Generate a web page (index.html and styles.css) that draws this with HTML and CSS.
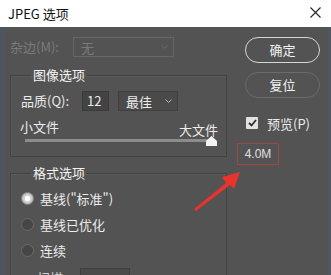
FILE: index.html
```html
<!DOCTYPE html>
<html lang="zh">
<head>
<meta charset="utf-8">
<title>JPEG 选项</title>
<link rel="stylesheet" href="styles.css">
</head>
<body>
<div class="window">
  <div class="titlebar">
    <span class="title">JPEG 选项</span>
    <svg class="close" width="11" height="11" viewBox="0 0 11 11"><path d="M0.5 0.5 L10.5 10.5 M10.5 0.5 L0.5 10.5" stroke="#222" stroke-width="1.1" fill="none"/></svg>
  </div>
  <div class="body">
    <div class="left">
      <div class="row matte">
        <span class="label dim">杂边(M):</span>
        <div class="select disabled"><span>无</span><svg class="chev" width="7" height="4" viewBox="0 0 7 4"><path d="M0.5 0.5 L3.5 3.5 L6.5 0.5" stroke="#6a6a6a" fill="none"/></svg></div>
      </div>
      <fieldset class="group image-opts">
        <legend>图像选项</legend>
        <div class="row quality">
          <span class="label qlabel">品质(Q):</span>
          <div class="input">12</div>
          <div class="select best"><span>最佳</span><svg class="chev" width="7" height="4" viewBox="0 0 7 4"><path d="M0.5 0.5 L3.5 3.5 L6.5 0.5" stroke="#b8b8b8" fill="none"/></svg></div>
        </div>
        <div class="sizes">
          <span class="small">小文件</span>
          <span class="large">大文件</span>
        </div>
        <div class="slider">
          <div class="track"></div>
          <svg class="thumb" width="11" height="10" viewBox="0 0 11 10"><path d="M5.5 0 L11 5 L11 10 L0 10 L0 5 Z" fill="#f2f2f2"/></svg>
        </div>
      </fieldset>
      <fieldset class="group format-opts">
        <legend>格式选项</legend>
        <div class="radio-row"><span class="radio on"></span><span>基线("标准")</span></div>
        <div class="radio-row"><span class="radio"></span><span>基线已优化</span></div>
        <div class="radio-row"><span class="radio"></span><span>连续</span></div>
        <div class="row scan"><span class="label scan-label">扫描:</span><div class="select scan-sel"></div></div>
      </fieldset>
    </div>
    <div class="right">
      <button class="btn primary">确定</button>
      <button class="btn secondary">复位</button>
      <div class="check">
        <span class="box"><svg width="9" height="8" viewBox="0 0 9 8"><path d="M1 4 L3.5 6.5 L8 1" stroke="#2e2e2e" stroke-width="1.8" fill="none"/></svg></span>
        <span>预览(P)</span>
      </div>
      <div class="filesize">4.0M</div>
    </div>
  </div>
  <svg class="arrow" width="331" height="275" viewBox="0 0 331 275">
    <path d="M194 209 L226 183 L222 177 L240 172 L234 189 L230 185 L196 211 Z" fill="#e8332e"/>
  </svg>
</div>
</body>
</html>
```
FILE: styles.css
```css
* { box-sizing: border-box; }
html, body { margin: 0; padding: 0; }
body {
  width: 331px;
  height: 275px;
  overflow: hidden;
  font-family: "Noto Sans CJK SC", "Noto Sans", sans-serif;
  font-size: 13px;
  color: #ececec;
  background: #535353;
}
.window {
  position: relative;
  width: 331px;
  height: 275px;
}
.titlebar {
  height: 27px;
  background: #ffffff;
  display: flex;
  align-items: center;
  justify-content: space-between;
  padding: 0 10px 0 8px;
}
.title {
  color: #111;
  font-size: 13px;
  line-height: 16px;
}
.close { margin-top: -2px; }
.body {
  display: flex;
  height: 248px;
  background: #535353;
  border-left: 6px solid #4e555d;
  border-right: 3px solid #4f5760;
  padding: 10px 0 0 4px;
}
.left {
  width: 217px;
  flex: none;
}
.row {
  display: flex;
  align-items: center;
  height: 20px;
}
.label { line-height: 20px; }
.dim { color: #7b7b7b; }
.matte .label { width: 63px; }
.select {
  height: 20px;
  display: flex;
  align-items: center;
  justify-content: space-between;
  border: 1px solid #3f3f3f;
  background: #4a4a4a;
  padding: 0 5px 0 7px;
}
.select.disabled {
  width: 101px;
  background: #535353;
  border-color: #666;
  color: #7b7b7b;
}
.group {
  margin: 0;
  border: 1px solid #424242;
  box-shadow: inset 1px 1px 0 #5b5b5b;
  padding: 0 8px 0 10px;
  min-width: 0;
}
.group legend {
  margin-left: 10px;
  padding: 0 2px;
  line-height: 18px;
  color: #f4f4f4;
}
.image-opts {
  margin-top: 9px;
  padding-bottom: 9px;
}
.quality { margin-top: 7px; }
.qlabel { width: 61px; }
.input {
  width: 27px;
  height: 20px;
  background: #434343;
  border: 1px solid #3a3a3a;
  line-height: 18px;
  padding-left: 4px;
}
.best {
  width: 60px;
  margin-left: 9px;
}
.sizes {
  display: flex;
  justify-content: space-between;
  height: 20px;
  margin-top: 6px;
  margin-left: -1px;
}
.small { line-height: 20px; }
.large { line-height: 20px; margin-top: 3px; }
.slider {
  position: relative;
  height: 8px;
  margin-left: 4px;
  margin-right: 5px;
}
.track {
  margin-top: 2px;
  height: 3px;
  background: #8c8c8c;
}
.thumb {
  position: absolute;
  right: -4px;
  top: -3px;
}
.format-opts {
  margin-top: 7px;
  padding-top: 3px;
  height: 120px;
}
.radio-row {
  display: flex;
  align-items: center;
  height: 26px;
  gap: 6px;
}
.radio {
  width: 13px;
  height: 13px;
  border-radius: 50%;
  border: 1px solid #6a6a6a;
  background: #464646;
  flex: none;
}
.radio.on {
  background: radial-gradient(circle, #ffffff 0 2.5px, #d4d4d4 3px 4px, #bdbdbd 4.5px);
  border-color: #8a8a8a;
}
.scan { margin-top: 5px; }
.scan-label { color: #cfcfcf; width: 59px; padding-left: 16px; }
.scan-sel { width: 50px; }
.right {
  width: 95px;
  flex: none;
  margin-left: 9px;
  display: flex;
  flex-direction: column;
}
.btn {
  width: 75px;
  height: 26px;
  margin-left: 9px;
  border-radius: 13px;
  background: #535353;
  font-family: inherit;
  font-size: 13px;
  color: #f2f2f2;
  padding: 0;
  line-height: 22px;
}
.primary { border: 1.5px solid #d6d6d6; }
.secondary { border: 1.5px solid #6b6b6b; margin-top: 9px; }
.check {
  display: flex;
  align-items: center;
  gap: 9px;
  margin-top: 19px;
  margin-left: 10px;
  height: 12px;
}
.box {
  width: 12px;
  height: 12px;
  background: #e2e2e2;
  border-radius: 1px;
  display: flex;
  align-items: center;
  justify-content: center;
}
.filesize {
  margin-top: 14px;
  margin-left: 1px;
  width: 42px;
  height: 22px;
  border: 1px solid #a04646;
  font-family: "Liberation Sans", Arial, sans-serif;
  font-size: 12px;
  line-height: 20px;
  text-align: center;
  color: #e0e0e0;
}
.arrow {
  position: absolute;
  left: 0;
  top: 0;
  pointer-events: none;
}
```
